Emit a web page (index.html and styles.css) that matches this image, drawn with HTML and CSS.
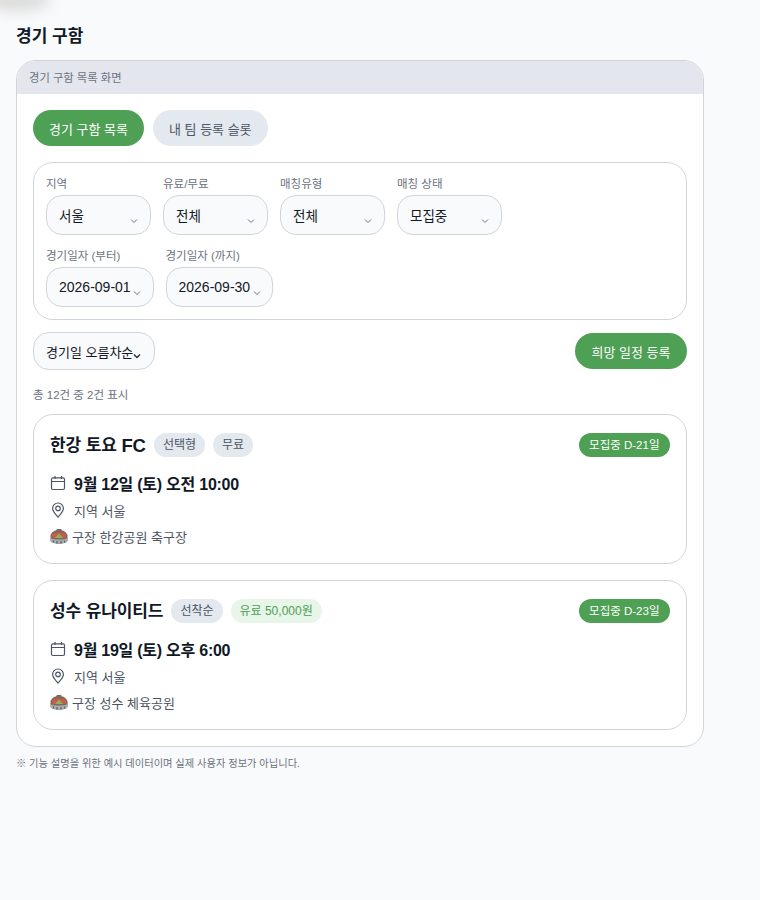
FILE: index.html
```html
<!DOCTYPE html>
<html lang="ko">
<head>
    <meta charset="UTF-8">
    <meta name="viewport" content="width=device-width, initial-scale=1.0">
    <title>경기 구함</title>
    <link rel="stylesheet" href="styles.css">
</head>
<body>
    <div class="corner-smudge"></div>

    <h1>경기 구함</h1>

    <div class="frame">
        <div class="frame-header">경기 구함 목록 화면</div>
        <div class="frame-body">
            <div class="tabs">
                <button type="button" class="pill pill-green">경기 구함 목록</button>
                <button type="button" class="pill pill-gray">내 팀 등록 슬롯</button>
            </div>

            <div class="filters">
                <div class="filter-row">
                    <div class="field">
                        <span class="field-label">지역</span>
                        <div class="select select-wide"><span>서울</span><svg class="chevron" viewBox="0 0 8 6"><path d="M1 1.5 4 4.5 7 1.5"/></svg></div>
                    </div>
                    <div class="field">
                        <span class="field-label">유료/무료</span>
                        <div class="select select-wide"><span>전체</span><svg class="chevron" viewBox="0 0 8 6"><path d="M1 1.5 4 4.5 7 1.5"/></svg></div>
                    </div>
                    <div class="field">
                        <span class="field-label">매칭유형</span>
                        <div class="select select-wide"><span>전체</span><svg class="chevron" viewBox="0 0 8 6"><path d="M1 1.5 4 4.5 7 1.5"/></svg></div>
                    </div>
                    <div class="field">
                        <span class="field-label">매칭 상태</span>
                        <div class="select select-wide"><span>모집중</span><svg class="chevron" viewBox="0 0 8 6"><path d="M1 1.5 4 4.5 7 1.5"/></svg></div>
                    </div>
                </div>
                <div class="filter-row">
                    <div class="field">
                        <span class="field-label">경기일자 (부터)</span>
                        <div class="select select-date"><span>2026-09-01</span><svg class="chevron" viewBox="0 0 8 6"><path d="M1 1.5 4 4.5 7 1.5"/></svg></div>
                    </div>
                    <div class="field">
                        <span class="field-label">경기일자 (까지)</span>
                        <div class="select select-date"><span>2026-09-30</span><svg class="chevron" viewBox="0 0 8 6"><path d="M1 1.5 4 4.5 7 1.5"/></svg></div>
                    </div>
                </div>
            </div>

            <div class="toolbar">
                <div class="select select-sort"><span>경기일 오름차순</span><svg class="chevron chevron-dark" viewBox="0 0 8 6"><path d="M1 1.5 4 4.5 7 1.5"/></svg></div>
                <button type="button" class="pill pill-green">희망 일정 등록</button>
            </div>

            <p class="count">총 12건 중 2건 표시</p>

            <div class="card">
                <div class="card-top">
                    <div class="card-title">
                        <h2>한강 토요 <span class="latin">FC</span></h2>
                        <span class="tag">선택형</span>
                        <span class="tag">무료</span>
                    </div>
                    <span class="status">모집중 D-21일</span>
                </div>
                <div class="line line-date">
                    <svg class="line-icon" viewBox="0 0 16 16"><rect x="1.5" y="2.8" width="13" height="11.7" rx="1.5"/><path d="M1.5 6.5H14.5M5 1V4M11.5 1V4"/></svg>
                    <span>9월 12일 (토) 오전 10:00</span>
                </div>
                <div class="line">
                    <svg class="line-icon" viewBox="0 0 16 16"><path d="M8 15C5 11.6 2.6 9.2 2.6 6.4a5.4 5.4 0 0 1 10.8 0C13.4 9.2 11 11.6 8 15Z"/><circle cx="8" cy="6.4" r="2.3"/></svg>
                    <span>지역 서울</span>
                </div>
                <div class="line line-stadium">
                    <svg class="stadium" viewBox="0 0 18 17"><path d="M.5 7C2 4 4 2.5 6 2.5L7 1H11L12 2.5C14 2.5 16 4 17.5 7V13C15 16.5 3 16.5 .5 13Z" fill="#7d6a5c"/><path d="M1.5 6.5C4 4 14 4 16.5 6.5L15 10H3Z" fill="#cf5a48"/><path d="M5 10 9 5.5 13 10Z" fill="#8ab356"/><path d="M.5 10C3 12 15 12 17.5 10V13C15 16.5 3 16.5 .5 13Z" fill="#a9aeb2"/><path d="M3.5 12.5V14.5M7 13V15.5M11 13V15.5M14.5 12.5V14.5" stroke="#5c5f63" stroke-width="1.2" fill="none"/></svg>
                    <span>구장 한강공원 축구장</span>
                </div>
            </div>

            <div class="card">
                <div class="card-top">
                    <div class="card-title">
                        <h2>성수 유나이티드</h2>
                        <span class="tag">선착순</span>
                        <span class="tag tag-green">유료 50,000원</span>
                    </div>
                    <span class="status">모집중 D-23일</span>
                </div>
                <div class="line line-date">
                    <svg class="line-icon" viewBox="0 0 16 16"><rect x="1.5" y="2.8" width="13" height="11.7" rx="1.5"/><path d="M1.5 6.5H14.5M5 1V4M11.5 1V4"/></svg>
                    <span>9월 19일 (토) 오후 6:00</span>
                </div>
                <div class="line">
                    <svg class="line-icon" viewBox="0 0 16 16"><path d="M8 15C5 11.6 2.6 9.2 2.6 6.4a5.4 5.4 0 0 1 10.8 0C13.4 9.2 11 11.6 8 15Z"/><circle cx="8" cy="6.4" r="2.3"/></svg>
                    <span>지역 서울</span>
                </div>
                <div class="line line-stadium">
                    <svg class="stadium" viewBox="0 0 18 17"><path d="M.5 7C2 4 4 2.5 6 2.5L7 1H11L12 2.5C14 2.5 16 4 17.5 7V13C15 16.5 3 16.5 .5 13Z" fill="#7d6a5c"/><path d="M1.5 6.5C4 4 14 4 16.5 6.5L15 10H3Z" fill="#cf5a48"/><path d="M5 10 9 5.5 13 10Z" fill="#8ab356"/><path d="M.5 10C3 12 15 12 17.5 10V13C15 16.5 3 16.5 .5 13Z" fill="#a9aeb2"/><path d="M3.5 12.5V14.5M7 13V15.5M11 13V15.5M14.5 12.5V14.5" stroke="#5c5f63" stroke-width="1.2" fill="none"/></svg>
                    <span>구장 성수 체육공원</span>
                </div>
            </div>
        </div>
    </div>

    <p class="footnote">※ 기능 설명을 위한 예시 데이터이며 실제 사용자 정보가 아닙니다.</p>
</body>
</html>
```

FILE: styles.css
```css
* {
    box-sizing: border-box;
}
body {
    font-family: "Liberation Sans", "Noto Sans CJK KR", sans-serif;
    margin: 0;
    padding: 26px 16px 0;
    min-height: 900px;
    background-color: #f9fafc;
    color: #111827;
}
.corner-smudge {
    position: absolute;
    left: -14px;
    top: -14px;
    width: 64px;
    height: 26px;
    border-radius: 50%;
    background-color: #dcdcdc;
    filter: blur(7px);
}
h1 {
    margin: 0 0 12px;
    font-size: 17px;
    line-height: 22px;
    font-weight: 600;
}
.frame {
    width: 688px;
    background-color: white;
    border: 1px solid #d1d5db;
    border-radius: 20px;
    overflow: hidden;
}
.frame-header {
    height: 33px;
    padding: 0 12px;
    background-color: #e3e7ed;
    color: #6b7280;
    font-size: 11.3px;
    line-height: 34px;
}
.frame-body {
    padding: 16px;
}
.tabs {
    display: flex;
    gap: 9px;
    margin-bottom: 16px;
}
.pill {
    height: 36px;
    padding: 0 16px;
    border: none;
    border-radius: 18px;
    font-family: inherit;
    font-size: 13px;
}
.pill-green {
    background-color: #4ea055;
    color: white;
}
.pill-gray {
    background-color: #e4e8ef;
    color: #4b5563;
}
.filters {
    display: flex;
    flex-direction: column;
    gap: 14px;
    height: 158px;
    padding: 14px 12px 12px;
    border: 1px solid #d1d5db;
    border-radius: 20px;
    margin-bottom: 12px;
}
.filter-row {
    display: flex;
    gap: 12px;
}
.field {
    display: flex;
    flex-direction: column;
    gap: 3px;
}
.field-label {
    font-size: 11.5px;
    line-height: 15px;
    color: #6b7280;
}
.select {
    display: flex;
    align-items: center;
    justify-content: space-between;
    height: 40px;
    border: 1px solid #d1d5db;
    border-radius: 16px;
    background-color: #f9fafb;
    font-size: 13.5px;
    color: #111827;
}
.select-wide {
    width: 105px;
    padding: 0 12px;
}
.select-date {
    width: 107.5px;
    padding: 0 11.5px 0 12px;
    font-size: 14px;
    white-space: nowrap;
}
.select-sort {
    width: 122px;
    height: 38px;
    padding: 0 13px 0 12px;
    font-size: 13px;
    white-space: nowrap;
}
.chevron {
    width: 8px;
    height: 6px;
    margin-top: 11px;
    flex-shrink: 0;
    fill: none;
    stroke: #6b7280;
    stroke-width: 1;
}
.chevron-dark {
    margin-top: 9px;
    stroke: #1f2937;
    stroke-width: 1.3;
}
.toolbar {
    display: flex;
    justify-content: space-between;
    align-items: center;
    margin-bottom: 17px;
}
.toolbar .pill {
    padding: 0 16.5px;
}
.count {
    margin: 0 0 11px;
    font-size: 11.5px;
    line-height: 16px;
    color: #6b7280;
}
.card {
    height: 150px;
    padding: 18px 16px 0;
    border: 1px solid #d1d5db;
    border-radius: 20px;
    margin-bottom: 16px;
}
.card:last-child {
    margin-bottom: 0;
}
.card-top {
    display: flex;
    justify-content: space-between;
    align-items: center;
    height: 24px;
    margin-bottom: 12px;
}
.card-title {
    display: flex;
    align-items: center;
    gap: 8px;
}
.card-title h2 {
    margin: 2px 0 0;
    font-size: 17px;
    line-height: 24px;
    letter-spacing: -0.1px;
    font-weight: 600;
}
.latin {
    position: relative;
    top: 1px;
    font-size: 18.5px;
    line-height: 20px;
}
.tag {
    height: 24px;
    padding: 0 9px;
    border-radius: 12px;
    background-color: #e4e8ef;
    color: #4b5563;
    font-size: 12px;
    line-height: 24px;
}
.tag-green {
    background-color: #e8f5e9;
    color: #4ea055;
}
.status {
    height: 24px;
    padding: 0 10.5px;
    border-radius: 12px;
    background-color: #4ea055;
    color: white;
    font-size: 11.5px;
    line-height: 24px;
}
.line {
    display: flex;
    align-items: center;
    gap: 8px;
    height: 26px;
    font-size: 13px;
    color: #4b5563;
}
.line-date {
    height: 28px;
    font-size: 16px;
    letter-spacing: -0.25px;
    font-weight: 600;
    color: #111827;
}
.line-stadium {
    gap: 4px;
}
.line-icon {
    width: 16px;
    height: 16px;
    flex-shrink: 0;
    fill: none;
    stroke: #4b5563;
    stroke-width: 1.2;
}
.stadium {
    width: 18px;
    height: 17px;
    flex-shrink: 0;
}
.footnote {
    margin: 10px 0 0;
    font-size: 10.25px;
    line-height: 14px;
    color: #6b7280;
}
```
